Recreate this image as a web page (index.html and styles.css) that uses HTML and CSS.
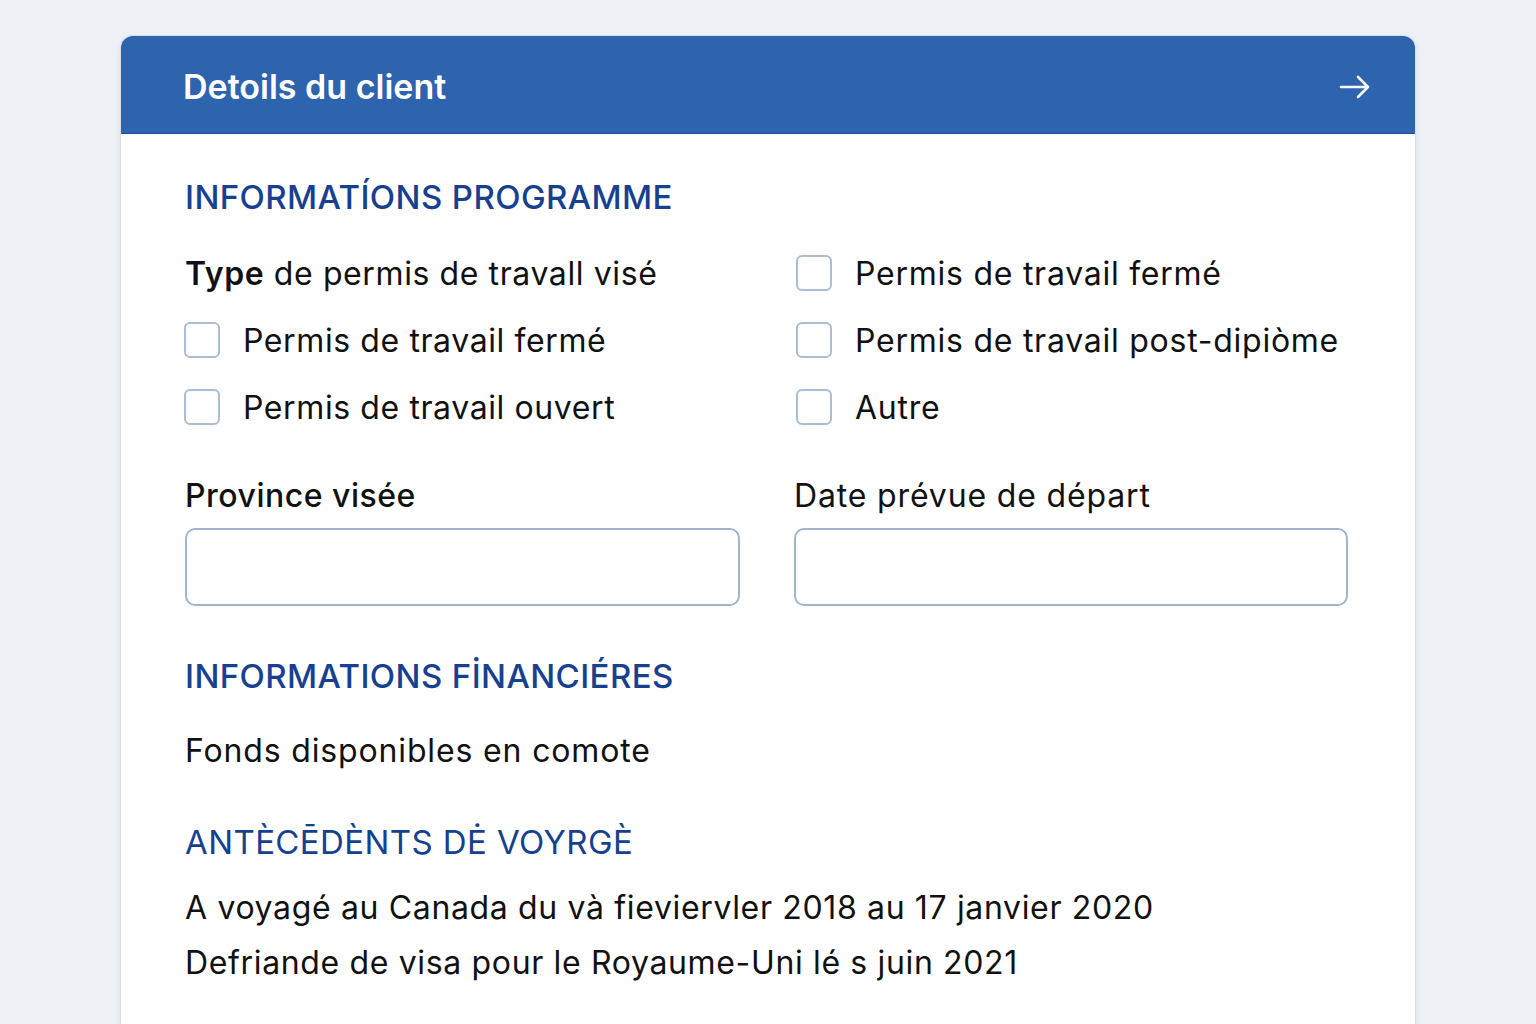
FILE: index.html
```html
<!DOCTYPE html>
<html lang="fr">
<head>
<meta charset="utf-8">
<title>Detoils du client</title>
<link rel="stylesheet" href="styles.css">
</head>
<body>
<div class="card">
  <header class="card-header">
    <h1 class="card-title">Detoils du client</h1>
    <svg class="arrow" viewBox="0 0 32 24" width="32" height="24" aria-hidden="true">
      <path d="M2 12 H29 M19 2 L29 12 L19 22" fill="none" stroke="#fff" stroke-width="2.6" stroke-linecap="round" stroke-linejoin="round"/>
    </svg>
  </header>
  <div class="card-body">
    <h2 class="section-title">INFORMATÍONS PROGRAMME</h2>
    <div class="two-col checks">
      <div class="col">
        <div class="row"><span class="field-q"><b>Type</b> de permis de travall visé</span></div>
        <label class="row"><span class="box"></span><span>Permis de travail fermé</span></label>
        <label class="row"><span class="box"></span><span>Permis de travail ouvert</span></label>
      </div>
      <div class="col">
        <label class="row"><span class="box"></span><span>Permis de travail fermé</span></label>
        <label class="row"><span class="box"></span><span>Permis de travail post-dipiòme</span></label>
        <label class="row"><span class="box"></span><span>Autre</span></label>
      </div>
    </div>
    <div class="two-col fields">
      <div class="field">
        <div class="field-label strong">Province visée</div>
        <div class="input"></div>
      </div>
      <div class="field">
        <div class="field-label">Date prévue de départ</div>
        <div class="input"></div>
      </div>
    </div>
    <h2 class="section-title sec2">INFORMATIONS FİNANCIÉRES</h2>
    <p class="text fonds">Fonds disponibles en comote</p>
    <h2 class="section-title light sec3">ANTÈCĒDÈNTS DĖ VOYRGÈ</h2>
    <p class="text history">A voyagé au Canada du và fieviervler 2018 au 17 janvier 2020<br>Defriande de visa pour le Royaume-Uni lé s juin 2021</p>
  </div>
</div>
</body>
</html>
```

FILE: styles.css
```css
* { box-sizing: border-box; }
html, body { margin: 0; padding: 0; }
body {
  background: #eef1f5;
  font-family: Inter, "Noto Sans", "Liberation Sans", sans-serif;
  color: #111;
  height: 1024px;
  overflow: hidden;
  padding: 36px 121px 0 121px;
}
.card {
  background: #fff;
  border-radius: 12px 12px 0 0;
  box-shadow: 0 0 0 1px #d9dee6, 0 2px 8px rgba(30, 50, 90, 0.08);
  min-height: 1000px;
}
.card-header {
  height: 98px;
  background: #2e63ad;
  border-radius: 12px 12px 0 0;
  border-bottom: 1px solid #1f4f9c;
  display: flex;
  align-items: center;
  justify-content: space-between;
  padding: 0 44px 0 62px;
}
.card-title {
  margin: 0;
  margin-top: 4px;
  color: #fff;
  font-size: 34px;
  font-weight: 600;
  letter-spacing: 0;
}
.arrow { display: block; margin-top: 5px; }
.card-body { padding: 43px 66px 0 64px; }
.section-title {
  margin: 0;
  color: #17408f;
  font-size: 33px;
  line-height: 40px;
  font-weight: 500;
  letter-spacing: 0.4px;
}
.section-title.light { font-weight: 400; }
.two-col {
  display: grid;
  grid-template-columns: 555px 554px;
  column-gap: 54px;
}
.checks { margin-top: 36px; }
.col { display: flex; flex-direction: column; gap: 27px; }
.row {
  display: flex;
  align-items: center;
  gap: 23px;
  height: 40px;
  font-size: 32px;
  letter-spacing: 0.6px;
}
.col:first-child .row { margin-left: -1px; }
.col:last-child .row { padding-left: 2px; }
.col:last-child .row span:last-child { letter-spacing: 0.75px; }
.field-q { padding-left: 1px; }
.field-q b { font-weight: 600; }
.box {
  width: 36px;
  height: 36px;
  border: 2px solid #abbdd4;
  border-radius: 6px;
  flex: none;
}
.fields { margin-top: 50px; }
.field { display: flex; flex-direction: column; gap: 13px; }
.field-label { font-size: 32px; line-height: 38px; letter-spacing: 0.85px; }
.field-label.strong { font-weight: 500; letter-spacing: 0.5px; }
.input {
  height: 78px;
  border: 2px solid #a3b5cc;
  border-radius: 10px;
}
.sec2 { margin-top: 50px; }
.text { margin: 0; font-size: 32px; line-height: 38px; letter-spacing: 0.85px; }
.fonds { margin-top: 36px; }
.sec3 { margin-top: 52px; }
.history { margin-top: 18px; line-height: 55px; letter-spacing: 0.65px; }
```
